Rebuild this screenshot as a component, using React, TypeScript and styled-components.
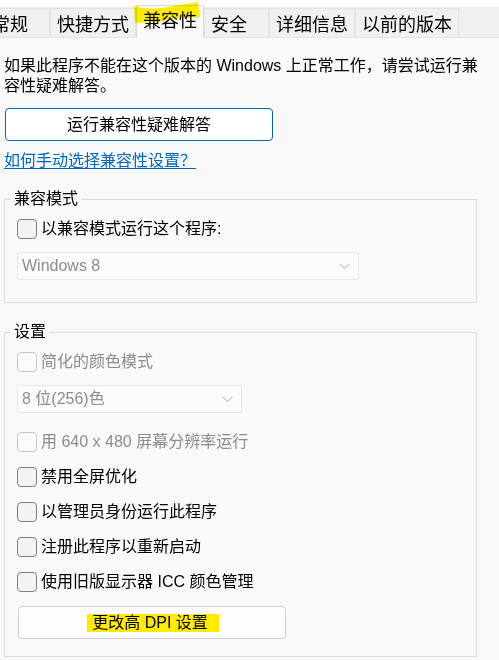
import styled, { createGlobalStyle } from 'styled-components';

const GlobalStyle = createGlobalStyle`
  html, body {
    margin: 0;
    padding: 0;
    background: #f9f9f9;
  }
  body {
    font-family: "Liberation Sans", "Noto Sans CJK SC", sans-serif;
    color: #000;
    overflow: hidden;
  }
`;

// Tabs along the top of the property sheet
const TabBar = styled.div`
  position: relative;
  display: flex;
  align-items: flex-end;
  height: 37px;
  background: linear-gradient(#fdfdfd 0 7px, #f0f0f0 7px);
  border-bottom: 1px solid #e3e3e3;
`;

const Tab = styled.div<{ $active?: boolean; $first?: boolean }>`
  box-sizing: border-box;
  min-width: 65px;
  height: ${({ $active }) => ($active ? '33px' : '29px')};
  margin-bottom: ${({ $active }) => ($active ? '-1px' : '0')};
  margin-left: ${({ $first }) => ($first ? '-15px' : '0')};
  padding: ${({ $active }) => ($active ? '4px 6px 0' : '5px 6px 0')};
  background: ${({ $active }) => ($active ? '#f9f9f9' : '#f0f0f0')};
  border: 1px solid ${({ $active }) => ($active ? '#dadada' : '#e3e3e3')};
  border-bottom: none;
  font-size: 18px;
  line-height: 22px;
  white-space: nowrap;
`;

// yellow marker stroke drawn over the active tab
const Scribble = styled.svg`
  position: absolute;
  left: 0;
  top: 0;
  pointer-events: none;
  mix-blend-mode: multiply;
`;

// Page body
const Panel = styled.div`
  padding: 18px 22px 0 4px;
  font-size: 16px;
  line-height: 20px;
`;

const Description = styled.p`
  margin: 0;
  white-space: nowrap;
`;

const Button = styled.button<{ $accent?: boolean }>`
  display: flex;
  align-items: center;
  justify-content: center;
  box-sizing: border-box;
  width: 268px;
  height: 33px;
  margin: 12px 0 0 1px;
  padding: 0;
  border: 1px solid ${({ $accent }) => ($accent ? '#0067c0' : '#cfcfcf')};
  border-radius: 4px;
  background: ${({ $accent }) => ($accent ? '#ffffff' : '#fdfdfd')};
  font: inherit;
  font-size: 16px;
  color: #000;
`;

const Marked = styled.span`
  background: #ffea00;
  line-height: 18px;
  padding: 0 11px 0 5px;
  margin-left: 2px;
`;

const HelpLink = styled.a`
  display: inline-block;
  margin-top: 10px;
  color: #0067c0;
  text-decoration: underline;
  text-underline-offset: 2px;
`;

const Group = styled.fieldset<{ $gap: number; $bottom: number }>`
  margin: ${({ $gap }) => $gap}px 0 0 0;
  padding: 10px 0 ${({ $bottom }) => $bottom}px 12px;
  border: 1px solid #dcdcdc;
  min-width: 0;
`;

const Legend = styled.legend`
  padding: 0 3px;
  margin-left: -6px;
  line-height: 20px;
`;

const CheckRow = styled.label<{ $top: number; $disabled?: boolean }>`
  display: flex;
  align-items: center;
  gap: 4px;
  height: 20px;
  margin-top: ${({ $top }) => $top}px;
  color: ${({ $disabled }) => ($disabled ? '#8c8c8c' : '#000')};
  white-space: nowrap;
`;

const Box = styled.span<{ $disabled?: boolean }>`
  box-sizing: border-box;
  width: 20px;
  height: 20px;
  flex: none;
  border: 1px solid ${({ $disabled }) => ($disabled ? '#c6c6c6' : '#7f7f7f')};
  border-radius: 4px;
  background: ${({ $disabled }) => ($disabled ? '#fafafa' : '#f3f3f3')};
`;

const Select = styled.div<{ $width: number; $top: number }>`
  box-sizing: border-box;
  display: flex;
  align-items: center;
  justify-content: space-between;
  width: ${({ $width }) => $width}px;
  height: 28px;
  margin-top: ${({ $top }) => $top}px;
  padding: 0 8px 0 4px;
  border: 1px solid #e6e6e6;
  border-radius: 2px;
  background: #fbfbfb;
  color: #8c8c8c;
`;

const Chevron = () => (
  <svg width="11" height="7" viewBox="0 0 11 7">
    <path d="M0.5 0.8 L5.5 5.8 L10.5 0.8" fill="none" stroke="#a8a8a8" strokeWidth="1" />
  </svg>
);

const tabs = ['常规', '快捷方式', '兼容性', '安全', '详细信息', '以前的版本'];

const App = () => {
  return (
    <>
      <GlobalStyle />
      <TabBar>
        {tabs.map((t, i) => (
          <Tab key={t} $first={i === 0} $active={t === '兼容性'}>
            {t}
          </Tab>
        ))}
        <Scribble width="499" height="40" viewBox="0 0 499 40">
          <path
            d="M134 6 Q150 11 168 7 L198 2 L200 17 Q178 17 158 22 L135 23 Z"
            fill="#fff000"
          />
        </Scribble>
      </TabBar>
      <Panel>
        <Description>
          如果此程序不能在这个版本的 Windows 上正常工作，请尝试运行兼
          <br />
          容性疑难解答。
        </Description>
        <Button $accent>运行兼容性疑难解答</Button>
        <HelpLink href="#">如何手动选择兼容性设置？</HelpLink>

        <Group $gap={18} $bottom={22}>
          <Legend>兼容模式</Legend>
          <CheckRow $top={0}>
            <Box />
            以兼容模式运行这个程序:
          </CheckRow>
          <Select $width={342} $top={13}>
            Windows 8
            <Chevron />
          </Select>
        </Group>

        <Group $gap={19} $bottom={17}>
          <Legend>设置</Legend>
          <CheckRow $top={0} $disabled>
            <Box $disabled />
            简化的颜色模式
          </CheckRow>
          <Select $width={225} $top={13}>
            8 位(256)色
            <Chevron />
          </Select>
          <CheckRow $top={19} $disabled>
            <Box $disabled />
            用 640 x 480 屏幕分辨率运行
          </CheckRow>
          <CheckRow $top={15}>
            <Box />
            禁用全屏优化
          </CheckRow>
          <CheckRow $top={15}>
            <Box />
            以管理员身份运行此程序
          </CheckRow>
          <CheckRow $top={15}>
            <Box />
            注册此程序以重新启动
          </CheckRow>
          <CheckRow $top={15}>
            <Box />
            使用旧版显示器 ICC 颜色管理
          </CheckRow>
          <Button style={{ marginTop: 14 }}>
            <Marked>更改高 DPI 设置</Marked>
          </Button>
        </Group>
      </Panel>
    </>
  );
};

export default App;
